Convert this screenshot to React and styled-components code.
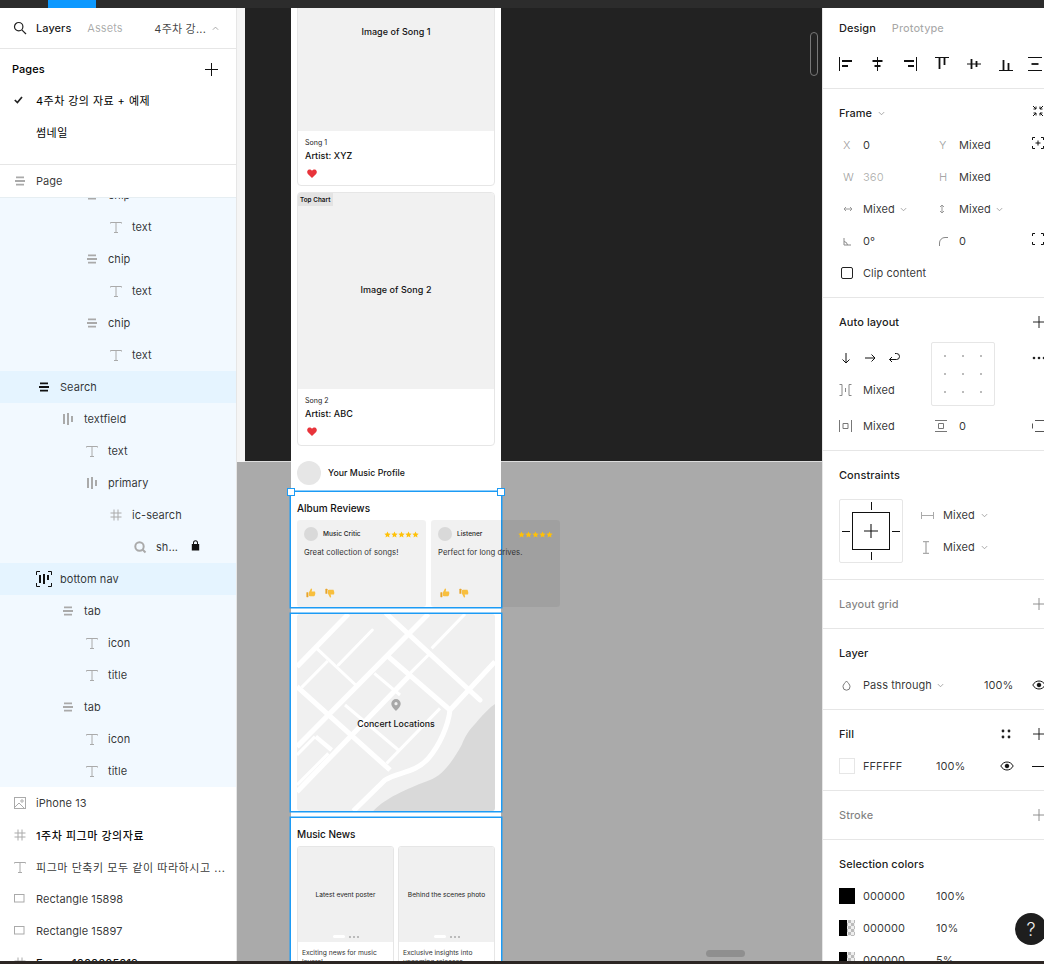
import React from 'react';
import styled, { createGlobalStyle } from 'styled-components';

const Global = createGlobalStyle`
  html, body { margin: 0; padding: 0; background: #2c2c2c; }
  body { font-family: Inter, "Noto Sans CJK KR", sans-serif; -webkit-font-smoothing: auto; }
  * { box-sizing: border-box; }
`;

const Shell = styled.div`
  width: 1044px; height: 964px; overflow: hidden; display: flex; flex-direction: column;
  background: #2c2c2c; color: #000; font-size: 11px; letter-spacing: 0.05px;
`;
const TopBar = styled.div`height: 8px; flex: none; padding-left: 48px; background: #2c2c2c;`;
const ActiveTab = styled.div`width: 48px; height: 8px; background: #0d99ff;`;
const Main = styled.div`height: 953px; flex: none; display: grid; grid-template-columns: 237px 585px 222px;`;
const BottomEdge = styled.div`height: 3px; flex: none; background: #2c2623;`;

/* ---------- left panel ---------- */
const Left = styled.aside`background: #fff; display: flex; flex-direction: column; overflow: hidden; border-right: 1px solid #e6e6e6;`;
const LeftHead = styled.div`
  height: 41px; flex: none; display: flex; align-items: center; padding-left: 13px; border-bottom: 1px solid #e6e6e6;
`;
const HeadTab = styled.span`
  font-weight: ${p => p.$on ? 500 : 400}; color: ${p => p.$on ? 'rgba(0,0,0,.9)' : 'rgba(0,0,0,.35)'};
  margin-left: ${p => p.$ml}px;
`;
const HeadPage = styled.span`margin-left: auto; color: rgba(0,0,0,.75); display: flex; align-items: center; gap: 6px; padding-right: 17px; letter-spacing: .2px;`;
const PagesBox = styled.div`height: 116px; flex: none; padding-top: 4px; border-bottom: 1px solid #e6e6e6;`;
const PagesHead = styled.div`height: 32px; display: flex; align-items: center; justify-content: space-between; padding: 0 18px 0 12px; font-weight: 500;`;
const PageItem = styled.div`height: 32px; display: flex; align-items: center; padding: 0 0 2px 14px; letter-spacing: .45px;`;
const Check = styled.span`width: 22px; display: flex;`;
const PageSticky = styled.div`
  height: 33px; flex: none; display: flex; align-items: center; padding-left: 12px; border-bottom: 1px solid #e6eef2;
  position: relative; z-index: 1; background: #fff; color: rgba(0,0,0,.8);
`;
const TreeClip = styled.div`flex: 1; overflow: hidden;`;
const Tree = styled.div`margin-top: -19px;`;
const Row = styled.div`
  height: 32px; display: flex; align-items: center; position: relative;
  padding-left: ${p => 12 + p.$level * 24}px;
  background: ${p => p.$tone === 'hi' ? '#e5f4ff' : p.$tone === 'sel' ? '#f2f9ff' : '#fff'};
  color: rgba(0,0,0,${p => p.$bold ? .95 : .8}); font-weight: ${p => p.$bold ? 500 : 400};
  letter-spacing: ${p => p.$ko ? '.55px' : '.05px'};
`;
const RowIcon = styled.span`width: 24px; height: 16px; display: flex; align-items: center; color: ${p => p.$dark ? '#111' : '#aaa'};`;
const Lock = styled.span`position: absolute; left: 191px; top: 9px; display: flex;`;

const ico = { width: 16, height: 16, viewBox: '0 0 16 16', fill: 'none', stroke: 'currentColor' };
const TIcon = () => <svg {...ico}><path d="M2.5 4.5v-1h11v1M8 3.5v10M6 13.5h4" strokeWidth="1" /></svg>;
const VStack = () => <svg {...ico} strokeWidth="1.8"><path d="M4 4.3h8M3 8h10M4 11.7h8" /></svg>;
const HStack = () => <svg {...ico} strokeWidth="2"><path d="M4 3v10M8 2v12M12 5v6" /></svg>;
const Hash = () => <svg {...ico}><path d="M6 2.5v11M10 2.5v11M2.5 6h11M2.5 10h11" /></svg>;
const Mag = () => <svg {...ico} strokeWidth="2"><circle cx="7.5" cy="7.5" r="4.2" /><path d="M10.5 10.5l3 3" /></svg>;
const ImgIcon = () => <svg {...ico}><rect x="2.5" y="2.5" width="11" height="11" /><circle cx="10" cy="6" r="1.2" /><path d="M2.5 12.5L7 8l5.5 5.5" /></svg>;
const RectIcon = () => <svg {...ico}><rect x="2.5" y="3.5" width="9.5" height="7.5" /></svg>;
const NavIcon = () => (
  <svg width="16" height="16" viewBox="0 0 16 16" fill="none" stroke="#111">
    <path d="M.5 4V.5H4M12 .5h3.5V4M15.5 12v3.5H12M4 15.5H.5V12" />
    <path d="M4 4v8M8 3v10M12 4v5" strokeWidth="2" />
  </svg>
);
const LockIcon = () => <svg width="9" height="11" viewBox="0 0 9 11"><path fill="#111" d="M2 4V2.8a2.5 2.5 0 0 1 5 0V4h1.2v6.5H.8V4zM3 4h3V2.8a1.5 1.5 0 0 0-3 0z" /></svg>;
const Plus = ({ s = 13, c = '#111' }) => <svg width={s} height={s} viewBox="0 0 13 13" stroke={c} fill="none"><path d="M6.5 0v13M0 6.5h13" /></svg>;
const Chevron = ({ up, c = '#999' }) => <svg width="7" height="5" viewBox="0 0 8 6" fill="none" stroke={c}><path d={up ? 'M.8 4.5L4 1.3l3.2 3.2' : 'M.8 1.3L4 4.5l3.2-3.2'} /></svg>;

const icons = {
  t: <TIcon />, v: <VStack />, h: <HStack />, hash: <Hash />, mag: <Mag />,
  img: <ImgIcon />, rect: <RectIcon />, nav: <NavIcon />,
};
const layers = [
  { label: 'chip', level: 3, icon: 'v', tone: 'sel' }, { label: 'text', level: 4, icon: 't', tone: 'sel' },
  { label: 'chip', level: 3, icon: 'v', tone: 'sel' }, { label: 'text', level: 4, icon: 't', tone: 'sel' },
  { label: 'chip', level: 3, icon: 'v', tone: 'sel' }, { label: 'text', level: 4, icon: 't', tone: 'sel' },
  { label: 'Search', level: 1, icon: 'v', tone: 'hi', dark: true }, { label: 'textfield', level: 2, icon: 'h', tone: 'sel' },
  { label: 'text', level: 3, icon: 't', tone: 'sel' }, { label: 'primary', level: 3, icon: 'h', tone: 'sel' },
  { label: 'ic-search', level: 4, icon: 'hash', tone: 'sel' }, { label: 'sh...', level: 5, icon: 'mag', tone: 'sel', locked: true },
  { label: 'bottom nav', level: 1, icon: 'nav', tone: 'hi', dark: true }, { label: 'tab', level: 2, icon: 'v', tone: 'sel' },
  { label: 'icon', level: 3, icon: 't', tone: 'sel' }, { label: 'title', level: 3, icon: 't', tone: 'sel' },
  { label: 'tab', level: 2, icon: 'v', tone: 'sel' }, { label: 'icon', level: 3, icon: 't', tone: 'sel' },
  { label: 'title', level: 3, icon: 't', tone: 'sel' }, { label: 'iPhone 13', level: 0, icon: 'img' },
  { label: '1주차 피그마 강의자료', level: 0, icon: 'hash', bold: true, ko: true },
  { label: '피그마 단축키 모두 같이 따라하시고 ...', level: 0, icon: 't', ko: true },
  { label: 'Rectangle 15898', level: 0, icon: 'rect' }, { label: 'Rectangle 15897', level: 0, icon: 'rect' },
  { label: 'Frame 1000005019', level: 0, icon: 'hash', bold: true },
];

const LeftPanel = () => (
  <Left>
    <LeftHead>
      <svg width="14" height="14" viewBox="0 0 14 14" fill="none" stroke="#222" strokeWidth="1.2"><circle cx="5.7" cy="5.7" r="4.2" /><path d="M8.8 8.8l4.2 4.2" /></svg>
      <HeadTab $on $ml={9}>Layers</HeadTab>
      <HeadTab $ml={16}>Assets</HeadTab>
      <HeadPage>4주차 강... <Chevron up /></HeadPage>
    </LeftHead>
    <PagesBox>
      <PagesHead>Pages <Plus /></PagesHead>
      <PageItem>
        <Check><svg width="9" height="8" viewBox="0 0 9 8" fill="none" stroke="#222" strokeWidth="1.7"><path d="M.8 4l2.6 2.6L8 1" /></svg></Check>
        4주차 강의 자료 + 예제
      </PageItem>
      <PageItem><Check />썸네일</PageItem>
    </PagesBox>
    <PageSticky><RowIcon><VStack /></RowIcon>Page</PageSticky>
    <TreeClip>
      <Tree>
        {layers.map((l, i) => (
          <Row key={i} $level={l.level} $tone={l.tone} $bold={l.bold} $ko={l.ko}>
            <RowIcon $dark={l.dark}>{icons[l.icon]}</RowIcon>
            {l.label}
            {l.locked && <Lock><LockIcon /></Lock>}
          </Row>
        ))}
      </Tree>
    </TreeClip>
  </Left>
);

/* ---------- canvas ---------- */
const Canvas = styled.main`position: relative; overflow: hidden; background: #aaa;`;
const DarkArea = styled.div`position: absolute; left: 8px; right: 0; top: 0; height: 454px; background: #222; border-bottom: 1px solid #ddd;`;
const EdgeStrip = styled.div`position: absolute; left: 0; top: 0; width: 8px; height: 454px; background: #f5f5f5;`;
const Phone = styled.div`
  position: absolute; left: 54px; top: -75.5px; width: 210px; background: #fff;
  display: flex; flex-direction: column;
`;
const SongCards = styled.div`display: flex; flex-direction: column; gap: 6px; padding: 0 6px;`;
const SongCard = styled.div`border: 1px solid #e6e6e6; border-radius: 4px; overflow: hidden; position: relative; height: 253.5px; display: flex; flex-direction: column;`;
const SongImage = styled.div`height: ${p => p.$h}px; flex: none; padding-bottom: 2px; background: #f1f1f1; display: flex; align-items: center; justify-content: center; font-size: 9px; font-weight: 500; color: #111;`;
const Badge = styled.span`position: absolute; left: 0; top: 0; height: 13px; padding: 0 3px 0 2px; background: #e3e3e3; font-size: 6.3px; font-weight: 600; line-height: 14px; color: #111;`;
const SongBody = styled.div`padding: 7px 7px 0; display: flex; flex-direction: column;`;
const SongName = styled.span`font-size: 7px; color: #222; line-height: 9px;`;
const Artist = styled.span`font-size: 9px; font-weight: 500; color: #111; margin-top: 3.5px; line-height: 11px;`;
const Heart = styled.svg`margin: 7.5px 0 0 2px;`;
const Profile = styled.div`height: 46.5px; flex: none; display: flex; align-items: center; gap: 7px; padding: 8px 6px 0; font-size: 8.75px; font-weight: 500; color: #111;`;
const Avatar = styled.span`
  width: ${p => p.$size}px; height: ${p => p.$size}px; flex: none; border-radius: 50%;
  background: ${p => p.$size > 20 ? '#e6e6e6' : '#d9d9d9'};
`;
const Section = styled.section`position: relative; box-shadow: 0 0 0 1.5px #1c9bf5; height: ${p => p.$h}px; padding: 0 6px; margin-top: ${p => p.$mt || 0}px;`;
const Handle = styled.span`position: absolute; top: -4px; ${p => p.$side}: -4px; width: 8px; height: 8px; background: #fff; border: 1px solid #1c9bf5; z-index: 1;`;
const SectionTitle = styled.h2`margin: 0; height: 28px; padding-top: ${p => p.$pt}px; display: flex; align-items: center; font-size: 10px; font-weight: 500; color: #111; letter-spacing: 0;`;
const Reviews = styled.div`display: flex; gap: 5px; width: 263px;`;
const Review = styled.article`
  width: 129px; height: 87px; flex: none; border-radius: 3px; background: rgba(0,0,0,.055); padding: 7px 7px 0;
  display: flex; flex-direction: column; color: #222;
`;
const ReviewHead = styled.div`display: flex; align-items: center; gap: 5px; font-size: 6.5px; font-weight: 500; color: #222;`;
const Stars = styled.span`margin-left: auto; display: flex; gap: 0;`;
const ReviewText = styled.p`margin: 6px 0 0; font-size: 7.7px; line-height: 11px; color: #333;`;
const Thumbs = styled.div`margin-top: auto; margin-bottom: 9px; display: flex; gap: 9px; padding-left: 2px;`;
const MapBox = styled.div`position: relative; height: 197px; border-radius: 3px; overflow: hidden; background: #f0f0f0;`;
const MapLabel = styled.div`position: absolute; inset: 0; display: flex; flex-direction: column; align-items: center; padding-top: 85px; gap: 8px; font-size: 8.75px; font-weight: 500; color: #111;`;
const NewsGrid = styled.div`display: grid; grid-template-columns: 97px 97px; gap: 4px;`;
const NewsCard = styled.article`border: 1px solid #e6e6e6; border-radius: 3px; overflow: hidden;`;
const NewsImage = styled.div`position: relative; height: 95px; background: #f0f0f0; display: flex; align-items: center; justify-content: center; font-size: 6.6px; color: #222; letter-spacing: 0;`;
const Dots = styled.span`position: absolute; bottom: 4px; left: 35px; display: flex; align-items: center; gap: 2px;`;
const Pill = styled.i`width: 12px; height: 3px; border-radius: 2px; background: #fff; margin-right: 2px;`;
const Dot = styled.i`width: 2px; height: 2px; border-radius: 50%; background: #aaa;`;
const NewsText = styled.p`margin: 0; padding: 7px 4px; font-size: 6.7px; line-height: 9px; color: #333; letter-spacing: 0;`;
const ScrollV = styled.div`position: absolute; left: 573px; top: 24px; width: 8px; height: 44px; border-radius: 4px; background: #222; border: 1px solid #777;`;
const ScrollH = styled.div`position: absolute; left: 469px; top: 942px; width: 39px; height: 7px; border-radius: 4px; background: #8f8f8f;`;

const Star = () => <svg width="7" height="7" viewBox="0 0 24 24"><path fill="#ffc107" d="M12 1.5l3.2 6.9 7.6.9-5.6 5.2 1.5 7.5L12 18.3l-6.7 3.7 1.5-7.5L1.2 9.3l7.6-.9z" /></svg>;
const FiveStars = () => <Stars>{[0, 1, 2, 3, 4].map(i => <Star key={i} />)}</Stars>;
const Thumb = ({ down }) => (
  <svg width="10" height="10" viewBox="0 0 10 10" style={down ? { transform: 'scale(1,-1)' } : undefined}>
    <path fill="#f8bf3e" d="M3 4.3L5 .6c.9-.2 1.3.6 1 1.5l-.4 1.4h3c.7 0 .9.8.5 1.2.4.4.3 1 0 1.2.2.5 0 1-.3 1.2.1.6-.2 1.1-.8 1.1H4c-.5 0-1-.2-1-.5z" />
    <rect x=".4" y="4.2" width="2" height="5" rx=".4" fill="#e9a52a" />
  </svg>
);
const HeartIcon = () => <Heart width="10" height="9" viewBox="0 0 10 9"><path fill="#e8343b" d="M5 9L.9 4.9C-.4 3.5.1 1 2.2.5 3.4.2 4.4.8 5 1.8 5.6.8 6.6.2 7.8.5c2.1.5 2.6 3 1.3 4.4z" /></Heart>;

const road = { stroke: '#fff', fill: 'none', strokeLinecap: 'butt', strokeLinejoin: 'round' };
const MapArt = () => (
  <svg width="198" height="197" viewBox="36 27 594 591" style={{ position: 'absolute', inset: 0 }}>
    <path fill="#d9d9d9" d="M265 618C290 590 340 560 435 525c40-15 70-60 95-105 15-40 30-50 50-75 20-22 35-38 50-48V618z" />
    <g {...road} strokeWidth="15">
      <path d="M190 27L36 185" />
      <path d="M36 245L315 495" />
      <path d="M430 27L36 425" />
      <path d="M305 27L585 285" strokeLinecap="round" />
      <path d="M310 155L495 315" />
      <path d="M370 215L36 560" />
      <path d="M630 170L495 315C490 360 465 420 430 460 390 505 340 500 300 525L205 618" />
      <path d="M92 395L140 435" strokeWidth="13" />
    </g>
    <g {...road} strokeWidth="9">
      <path d="M262 75L160 180" strokeLinecap="round" />
      <path d="M95 130L212 240" />
      <path d="M128 168L50 247" />
      <path d="M540 27L440 130" />
      <path d="M430 150L375 205" />
      <path d="M268 205L345 270" />
      <path d="M465 310L305 475" />
      <path d="M180 300L340 435" />
      <path d="M130 445L36 540" />
      <path d="M90 395L36 450" />
    </g>
  </svg>
);

const CanvasArea = () => (
  <Canvas>
    <EdgeStrip />
    <DarkArea />
    <Phone>
      <SongCards>
        <SongCard>
          <SongImage $h={197}>Image of Song 1</SongImage>
          <SongBody><SongName>Song 1</SongName><Artist>Artist: XYZ</Artist><HeartIcon /></SongBody>
        </SongCard>
        <SongCard>
          <SongImage $h={195.5}>Image of Song 2</SongImage>
          <Badge>Top Chart</Badge>
          <SongBody><SongName>Song 2</SongName><Artist>Artist: ABC</Artist><HeartIcon /></SongBody>
        </SongCard>
      </SongCards>
      <Profile><Avatar $size={24} />Your Music Profile</Profile>
      <Section $h={115}>
        <Handle $side="left" /><Handle $side="right" />
        <SectionTitle $pt={4}>Album Reviews</SectionTitle>
        <Reviews>
          <Review>
            <ReviewHead><Avatar $size={14} />Music Critic<FiveStars /></ReviewHead>
            <ReviewText>Great collection of songs!</ReviewText>
            <Thumbs><Thumb /><Thumb down /></Thumbs>
          </Review>
          <Review>
            <ReviewHead><Avatar $size={14} />Listener<FiveStars /></ReviewHead>
            <ReviewText>Perfect for long drives.</ReviewText>
            <Thumbs><Thumb /><Thumb down /></Thumbs>
          </Review>
        </Reviews>
      </Section>
      <Section $h={197} $mt={7}>
        <MapBox>
          <MapArt />
          <MapLabel>
            <svg width="10" height="12" viewBox="0 0 10 12"><path fill="#a8a8a8" fillRule="evenodd" d="M5 0a4.7 4.7 0 0 1 4.7 4.7C9.7 7.8 5 12 5 12S.3 7.8.3 4.7A4.7 4.7 0 0 1 5 0zm0 3.1a1.6 1.6 0 1 0 0 3.2 1.6 1.6 0 0 0 0-3.2z" /></svg>
            Concert Locations
          </MapLabel>
        </MapBox>
      </Section>
      <Section $h={160} $mt={7}>
        <SectionTitle $pt={3}>Music News</SectionTitle>
        <NewsGrid>
          <NewsCard>
            <NewsImage>Latest event poster<Dots><Pill /><Dot /><Dot /><Dot /></Dots></NewsImage>
            <NewsText>Exciting news for music lovers!</NewsText>
          </NewsCard>
          <NewsCard>
            <NewsImage>Behind the scenes photo<Dots><Pill /><Dot /><Dot /><Dot /></Dots></NewsImage>
            <NewsText>Exclusive insights into upcoming releases.</NewsText>
          </NewsCard>
        </NewsGrid>
      </Section>
    </Phone>
    <ScrollV />
    <ScrollH />
  </Canvas>
);

/* ---------- right panel ---------- */
const Right = styled.aside`position: relative; background: #fff; border-left: 1px solid #e6e6e6; overflow: hidden; width: 222px; display: flex; flex-direction: column;`;
const Block = styled.div`
  height: ${p => p.$h}px; flex: none; position: relative; border-bottom: ${p => p.$last ? 'none' : '1px solid #e6e6e6'};
  padding: ${p => p.$pt ?? 8}px 0 0 16px; display: flex; flex-direction: column;
`;
const Tabs = styled.div`display: flex; gap: 16px; height: 40px; flex: none; align-items: center; font-weight: 500;`;
const Tab = styled.span`color: ${p => p.$on ? 'rgba(0,0,0,.9)' : 'rgba(0,0,0,.35)'};`;
const AlignRow = styled.div`display: flex; gap: 18px; height: 32px; flex: none; align-items: center; width: 240px;`;
const AlignGlyph = styled.svg`flex: none; margin-left: ${p => p.$shift || 0}px;`;
const BlockHead = styled.div`
  height: 32px; flex: none; display: flex; align-items: center; gap: 6px; font-weight: 500;
  color: ${p => p.$muted ? 'rgba(0,0,0,.5)' : 'rgba(0,0,0,.9)'}; width: 206px;
`;
const HeadIcons = styled.span`margin-left: auto; display: flex; align-items: center; gap: 22px;`;
const Props = styled.div`display: grid; grid-template-columns: 96px 96px; grid-auto-rows: 32px; width: 192px; align-items: center;`;
const Prop = styled.div`display: flex; align-items: center; gap: ${p => p.$select ? 5 : 0}px; color: ${p => p.$dim ? 'rgba(0,0,0,.3)' : 'rgba(0,0,0,.8)'};`;
const PropKey = styled.span`width: 24px; margin-right: ${p => p.$select ? -5 : 0}px; display: flex; padding-left: 4px; color: rgba(0,0,0,.35);`;
const Gutter = styled.span`position: absolute; left: 209px; top: ${p => p.$top}px; display: flex; color: #111;`;
const CheckRow = styled.div`height: 32px; display: flex; align-items: center; gap: 10px; padding-left: 2px; color: rgba(0,0,0,.8);`;
const CheckBox = styled.span`width: 12px; height: 12px; border: 1px solid #222; border-radius: 2px;`;
const ALGrid = styled.div`display: grid; grid-template-columns: 92px 64px; grid-template-rows: 32px 32px; margin-top: 4px;`;
const ALDirs = styled.div`grid-column: 1; grid-row: 1; display: flex; gap: 12px; align-items: center; padding-left: 1px;`;
const ALGap = styled.div`grid-column: 1; grid-row: 2; display: flex; align-items: center; color: rgba(0,0,0,.8);`;
const AlignBox = styled.div`
  grid-column: 2; grid-row: 1 / 3; width: 64px; height: 64px; border: 1px solid #e6e6e6; border-radius: 2px;
  display: grid; grid-template-columns: repeat(3, 1fr); place-items: center; padding: 4px;
`;
const TinyDot = styled.i`width: 2px; height: 2px; background: #bbb;`;
const ALFoot = styled.div`display: flex; height: 32px; flex: none; align-items: center; color: rgba(0,0,0,.8); margin-top: 4px;`;
const FootKey = styled.span`width: 24px; color: rgba(0,0,0,.5); display: flex;`;
const DropKey = styled(FootKey)`margin-right: -5px; padding-left: 3px;`;
const ConstraintRow = styled.div`display: flex; gap: 18px; margin-top: 8px;`;
const ConstraintBox = styled.div`
  position: relative; width: 64px; height: 64px; border: 1px solid #e6e6e6; border-radius: 2px;
  display: flex; align-items: center; justify-content: center;
`;
const ConstraintInner = styled.div`width: 38px; height: 38px; border: 1px solid #111; display: flex; align-items: center; justify-content: center;`;
const Tick = styled.i`
  position: absolute; background: #111;
  ${p => p.$d === 't' ? 'left:31px;top:2px;width:1px;height:8px;' :
    p.$d === 'b' ? 'left:31px;bottom:2px;width:1px;height:8px;' :
    p.$d === 'l' ? 'top:31px;left:2px;height:1px;width:8px;' : 'top:31px;right:2px;height:1px;width:8px;'}
`;
const CSelects = styled.div`display: flex; flex-direction: column;`;
const CSelect = styled.div`height: 32px; display: flex; align-items: center; gap: 6px; color: rgba(0,0,0,.8);`;
const CKey = styled.span`width: 16px; display: flex; color: #aaa;`;
const ValueRow = styled.div`height: 32px; flex: none; display: flex; align-items: center; gap: ${p => p.$gap || 0}px; color: rgba(0,0,0,.8);`;
const Opacity = styled.span`position: absolute; left: 161px; top: 40px; height: 32px; display: flex; align-items: center; color: rgba(0,0,0,.8);`;
const Swatch = styled.span`
  width: 16px; height: 16px; flex: none; margin-right: 8px; border: ${p => p.$line ? '1px solid #e6e6e6' : 'none'};
  background: ${p => p.$half
    ? 'linear-gradient(90deg,#000 50%,transparent 50%),repeating-conic-gradient(#bbb 0 25%,#eee 0 50%) 0 0/6px 6px'
    : p.$black ? '#000' : '#fff'};
`;
const Cell = styled.span`width: ${p => p.$w}px; flex: none;`;
const Help = styled.div`
  position: absolute; left: 192px; top: 905px; width: 32px; height: 32px; border-radius: 50%; background: #1e1e1e;
  color: #eee; font-size: 18px; font-weight: 300; display: flex; align-items: center; justify-content: center;
`;

const alignIcons = [
  { line: 'M.5 0v14', bars: 'M3 4h10M3 9h6' },
  { line: 'M6.5 0v14', bars: 'M1.5 4h10M3.5 9h6' },
  { line: 'M13.5 0v14', bars: 'M1 4h10M5 9h6' },
  { line: 'M0 .5h14', bars: 'M4.5 1v11M9.5 1v7' },
  { line: 'M0 7h14', bars: 'M4.5 2v10M9.5 4v6' },
  { line: 'M0 13.5h14', bars: 'M4.5 3v10M9.5 6v7' },
  { line: 'M0 .5h14M0 13.5h14', bars: 'M3.5 7h7', shift: -3 },
];
const AlignIcon = ({ line, bars, shift }) => (
  <AlignGlyph $shift={shift} width="14" height="14" viewBox="0 0 14 14" fill="none" stroke="#111">
    <path d={line} /><path d={bars} strokeWidth="1.8" />
  </AlignGlyph>
);
const RightPanel = () => (
  <Right>
    <Block $h={81} $pt={0}>
      <Tabs><Tab $on>Design</Tab><Tab>Prototype</Tab></Tabs>
      <AlignRow>{alignIcons.map((a, i) => <AlignIcon key={i} {...a} />)}</AlignRow>
    </Block>
    <Block $h={209}>
      <BlockHead>Frame <Chevron /></BlockHead>
      <Props>
        <Prop><PropKey>X</PropKey>0</Prop><Prop><PropKey>Y</PropKey>Mixed</Prop>
        <Prop $dim><PropKey>W</PropKey>360</Prop><Prop><PropKey>H</PropKey>Mixed</Prop>
        <Prop $select><PropKey $select><svg width="10" height="6" viewBox="0 0 10 6" fill="none" stroke="#999"><path d="M1 3h8M3 1L1 3l2 2M7 1l2 2-2 2" /></svg></PropKey>Mixed<Chevron /></Prop>
        <Prop $select><PropKey $select><svg width="6" height="10" viewBox="0 0 6 10" fill="none" stroke="#999"><path d="M3 1v8M1 3l2-2 2 2M1 7l2 2 2-2" /></svg></PropKey>Mixed<Chevron /></Prop>
        <Prop><PropKey><svg width="9" height="9" viewBox="0 0 9 9" fill="none" stroke="#888"><path d="M1 1v7h7M1 4.5a4 4 0 0 1 3.5 3.5" /></svg></PropKey>0°</Prop>
        <Prop><PropKey><svg width="9" height="9" viewBox="0 0 9 9" fill="none" stroke="#888"><path d="M.5 9V6A5.5 5.5 0 0 1 6 .5h3" /></svg></PropKey>0</Prop>
      </Props>
      <CheckRow><CheckBox />Clip content</CheckRow>
      <Gutter $top={16}><svg width="12" height="12" viewBox="0 0 12 12" fill="none" stroke="#111"><path d="M1 1l3 3M4 1.5V4H1.5M11 1L8 4M8 1.5V4h2.5M1 11l3-3M4 10.5V8H1.5M11 11L8 8M8 10.5V8h2.5" /></svg></Gutter>
      <Gutter $top={48}><svg width="12" height="12" viewBox="0 0 12 12" fill="none" stroke="#111"><path d="M.5 3V.5H3M9 .5h2.5V3M11.5 9v2.5H9M3 11.5H.5V9M6 3.5v5M3.5 6h5" /></svg></Gutter>
      <Gutter $top={144}><svg width="12" height="12" viewBox="0 0 12 12" fill="none" stroke="#111"><path d="M.5 3V.5H3M9 .5h2.5V3M11.5 9v2.5H9M3 11.5H.5V9" /></svg></Gutter>
    </Block>
    <Block $h={153}>
      <BlockHead>Auto layout<HeadIcons><Plus s={12} /></HeadIcons></BlockHead>
      <ALGrid>
        <ALDirs>
          <svg width="12" height="12" viewBox="0 0 12 12" fill="none" stroke="#111"><path d="M6 1v10M2.5 7.5L6 11l3.5-3.5" /></svg>
          <svg width="12" height="12" viewBox="0 0 12 12" fill="none" stroke="#111"><path d="M1 6h10M7.5 2.5L11 6 7.5 9.5" /></svg>
          <svg width="12" height="12" viewBox="0 0 12 12" fill="none" stroke="#111"><path d="M7 1.5h1.5a3 3 0 0 1 0 6H1.5M4 5L1.5 7.5 4 10" /></svg>
        </ALDirs>
        <AlignBox>{Array.from({ length: 9 }, (_, i) => <TinyDot key={i} />)}</AlignBox>
        <ALGap>
          <FootKey><svg width="13" height="12" viewBox="0 0 13 12" fill="none" stroke="#888"><path d="M.5.5H3v11H.5M12.5.5H10v11h2.5M6.5 4v4" /></svg></FootKey>Mixed
        </ALGap>
      </ALGrid>
      <ALFoot>
        <FootKey><svg width="13" height="12" viewBox="0 0 13 12" fill="none" stroke="#777"><path d="M.5 0v12M12.5 0v12M4 3.5h5v5H4z" /></svg></FootKey>
        <Cell $w={72}>Mixed</Cell>
        <FootKey><svg width="13" height="12" viewBox="0 0 13 12" fill="none" stroke="#777"><path d="M0 .5h12M0 11.5h12M3.5 3.5h5v5h-5z" /></svg></FootKey>0
      </ALFoot>
      <Gutter $top={58}><svg width="14" height="4" viewBox="0 0 14 4"><circle cx="2" cy="2" r="1.3" fill="#222" /><circle cx="7" cy="2" r="1.3" fill="#222" /><circle cx="12" cy="2" r="1.3" fill="#222" /></svg></Gutter>
      <Gutter $top={122}><svg width="12" height="12" viewBox="0 0 12 12" fill="none" stroke="#555"><path d="M.5 3.5v5M3 .5h9M3 11.5h9" /></svg></Gutter>
    </Block>
    <Block $h={129}>
      <BlockHead>Constraints</BlockHead>
      <ConstraintRow>
        <ConstraintBox>
          <Tick $d="t" /><Tick $d="b" /><Tick $d="l" /><Tick $d="r" />
          <ConstraintInner><Plus s={14} /></ConstraintInner>
        </ConstraintBox>
        <CSelects>
          <CSelect><CKey><svg width="13" height="7" viewBox="0 0 13 7" fill="none" stroke="#aaa"><path d="M.5 0v7M12.5 0v7M1 3.5h11" /></svg></CKey>Mixed <Chevron /></CSelect>
          <CSelect><CKey><svg width="10" height="13" viewBox="0 0 10 13" fill="none" stroke="#aaa"><path d="M2 .5h6M2 12.5h6M5 1v11" strokeWidth="1.3" /></svg></CKey>Mixed <Chevron /></CSelect>
        </CSelects>
      </ConstraintRow>
    </Block>
    <Block $h={49}>
      <BlockHead $muted>Layout grid<HeadIcons><Plus s={12} c="#888" /></HeadIcons></BlockHead>
    </Block>
    <Block $h={81}>
      <BlockHead>Layer</BlockHead>
      <ValueRow $gap={5}>
        <DropKey><svg width="9" height="11" viewBox="0 0 9 11" fill="none" stroke="#777"><path d="M4.5 1C6 3 8 4.5 8 6.7a3.5 3.5 0 0 1-7 0C1 4.5 3 3 4.5 1z" /></svg></DropKey>
        Pass through<Chevron />
      </ValueRow>
      <Opacity>100%</Opacity>
      <Gutter $top={51}><EyeIcon /></Gutter>
    </Block>
    <Block $h={81}>
      <BlockHead>Fill<HeadIcons>
        <svg width="10" height="10" viewBox="0 0 10 10" fill="#222"><circle cx="2" cy="2" r="1.4" /><circle cx="8" cy="2" r="1.4" /><circle cx="2" cy="8" r="1.4" /><circle cx="8" cy="8" r="1.4" /></svg>
        <Plus s={12} />
      </HeadIcons></BlockHead>
      <ValueRow><Swatch $line /><Cell $w={73}>FFFFFF</Cell><Cell $w={64}>100%</Cell><EyeIcon /></ValueRow>
      <Gutter $top={56}><svg width="12" height="1"><path d="M0 .5h12" stroke="#111" /></svg></Gutter>
    </Block>
    <Block $h={49}>
      <BlockHead $muted>Stroke<HeadIcons><Plus s={12} c="#888" /></HeadIcons></BlockHead>
    </Block>
    <Block $h={130} $last>
      <BlockHead>Selection colors</BlockHead>
      <ValueRow><Swatch $black /><Cell $w={73}>000000</Cell>100%</ValueRow>
      <ValueRow><Swatch $half /><Cell $w={73}>000000</Cell>10%</ValueRow>
      <ValueRow><Swatch $half /><Cell $w={73}>000000</Cell>5%</ValueRow>
    </Block>
    <Help>?</Help>
  </Right>
);
function EyeIcon() {
  return <svg width="14" height="10" viewBox="0 0 14 10" fill="none" stroke="#111"><path d="M.8 5C2.3 2.3 4.5 1 7 1s4.7 1.3 6.2 4C11.7 7.7 9.5 9 7 9S2.3 7.7.8 5z" /><circle cx="7" cy="5" r="1.8" fill="#111" /></svg>;
}

export default function App() {
  return (
    <Shell>
      <Global />
      <TopBar><ActiveTab /></TopBar>
      <Main>
        <LeftPanel />
        <CanvasArea />
        <RightPanel />
      </Main>
      <BottomEdge />
    </Shell>
  );
}
